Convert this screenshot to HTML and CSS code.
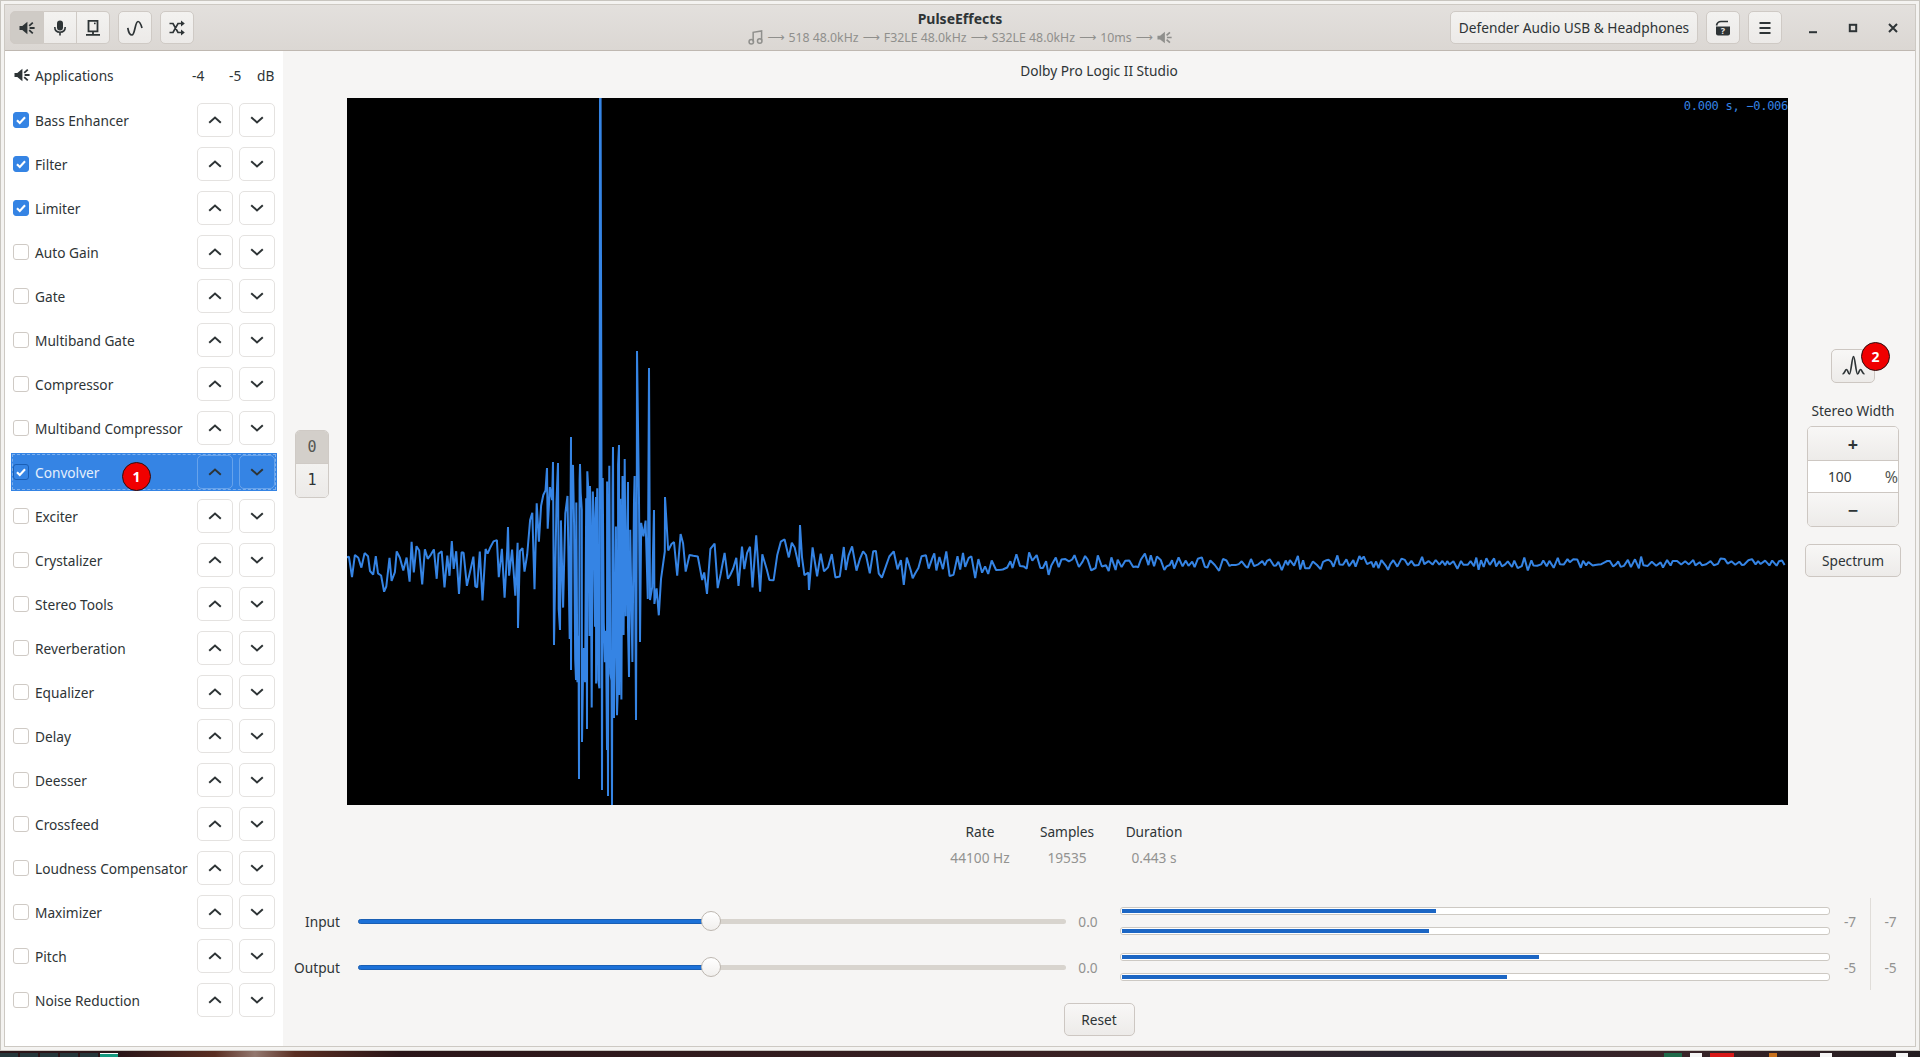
FILE: index.html
```html
<!DOCTYPE html>
<html lang="en">
<head>
  <meta charset="UTF-8">
  <title>PulseEffects</title>
  <link rel="stylesheet" href="styles.css">
</head>
<body>
  <svg class="icon-defs" width="0" height="0">
    <symbol id="i-speaker" viewBox="0 0 16 16">
      <path d="M0.5 6h2.8L8.400 1.800v12.400L3.300 10H0.500z" fill="currentColor"/>
      <path d="M10.200 5.800l3.600-3.200M10.600 8h5M10.200 10.200l3.600 3.200" fill="none" stroke="currentColor" stroke-width="1.8"/>
    </symbol>
    <symbol id="i-up" viewBox="0 0 16 16">
      <path d="M2.200 10.800L8 5.600 13.800 10.800" fill="none" stroke="currentColor" stroke-width="2"/>
    </symbol>
    <symbol id="i-down" viewBox="0 0 16 16">
      <path d="M2.200 5.200L8 10.400 13.800 5.200" fill="none" stroke="currentColor" stroke-width="2"/>
    </symbol>
    <symbol id="i-check" viewBox="0 0 16 16">
      <path d="M3.400 8.200l3.200 3.200 6-6.600" fill="none" stroke="#fff" stroke-width="2.400"/>
    </symbol>
  </svg>

  <div class="frame">
    <div class="window">
      <header class="titlebar">
        <div class="bar-left">
          <div class="btn-group">
            <button class="hbtn active"><svg class="ico"><use href="#i-speaker"/></svg></button>
            <button class="hbtn">
              <svg class="ico" viewBox="0 0 16 16"><rect x="5" y="0.500" width="6" height="10" rx="3" fill="currentColor"/><path d="M2.800 7c0 3.400 2.200 5.200 5.200 5.200s5.200-1.800 5.200-5.200M8 12v3.500" fill="none" stroke="currentColor" stroke-width="1.600"/></svg>
            </button>
            <button class="hbtn">
              <svg class="ico" viewBox="0 0 16 16"><path d="M3.500 0.900h9v10.500h-9zM1 14.800h14M8 11v3.500" fill="none" stroke="currentColor" stroke-width="1.800"/><rect x="9" y="2.600" width="1.600" height="1.600" fill="currentColor"/></svg>
            </button>
          </div>
          <button class="hbtn solo">
            <svg class="ico" viewBox="0 0 16 16"><path d="M0.800 8C1.500 12.500 3 15 5 15 8 15 8 1.500 11 1.500 13 1.500 14 4.500 15 8" fill="none" stroke="currentColor" stroke-width="1.700"/></svg>
          </button>
          <button class="hbtn solo">
            <svg class="ico" viewBox="0 0 16 16"><path d="M0.500 3.500H4L9 12.500h3.500M0.500 12.500H4L9 3.500h3.500" fill="none" stroke="currentColor" stroke-width="1.700"/><path d="M12 0.500L15.800 3.500 12 6.500zM12 9.500l3.800 3-3.800 3z" fill="currentColor"/></svg>
          </button>
        </div>

        <div class="title-box">
          <div class="title">PulseEffects</div>
          <div class="subtitle">
            <svg class="ico-small" viewBox="0 0 16 16"><path d="M5.500 12.500V2.500l9-1.500v10" fill="none" stroke="currentColor" stroke-width="1.600"/><circle cx="3.500" cy="12.600" r="2.400" fill="none" stroke="currentColor" stroke-width="1.600"/><circle cx="12.500" cy="11.600" r="2.400" fill="none" stroke="currentColor" stroke-width="1.600"/></svg>
            <span class="arrow">⟶</span><span>518 48.0kHz</span>
            <span class="arrow">⟶</span><span>F32LE 48.0kHz</span>
            <span class="arrow">⟶</span><span>S32LE 48.0kHz</span>
            <span class="arrow">⟶</span><span>10ms</span>
            <span class="arrow">⟶</span>
            <svg class="ico-small"><use href="#i-speaker"/></svg>
          </div>
        </div>

        <div class="bar-right">
          <button class="hbtn device">Defender Audio USB &amp; Headphones</button>
          <button class="hbtn solo">
            <svg class="ico" viewBox="0 0 16 16"><path d="M1.500 5.500C2 3 3.500 1.500 6 1.500h7" fill="none" stroke="currentColor" stroke-width="1.600"/><path d="M1 6.500h14v7a2 2 0 0 1-2 2H3a2 2 0 0 1-2-2z" fill="currentColor"/><text x="8" y="14" class="help-mark">?</text></svg>
          </button>
          <button class="hbtn solo">
            <svg class="ico" viewBox="0 0 16 16"><path d="M2.500 3h11M2.500 8h11M2.500 13h11" fill="none" stroke="currentColor" stroke-width="2"/></svg>
          </button>
          <div class="win-controls">
            <svg class="win-ico" viewBox="0 0 16 16"><path d="M4 12.200h8" stroke="currentColor" stroke-width="2"/></svg>
            <svg class="win-ico" viewBox="0 0 16 16"><rect x="4.800" y="4.800" width="6.400" height="6.400" fill="none" stroke="currentColor" stroke-width="2"/></svg>
            <svg class="win-ico" viewBox="0 0 16 16"><path d="M4 4l8 8M12 4l-8 8" stroke="currentColor" stroke-width="2"/></svg>
          </div>
        </div>
      </header>

      <div class="body-row">
        <aside class="sidebar">
          <div class="apps-row">
            <svg class="apps-ico"><use href="#i-speaker"/></svg>
            <span class="apps-label">Applications</span>
            <span class="db db-l">-4</span>
            <span class="db db-r">-5</span>
            <span class="db db-u">dB</span>
          </div>

          <div class="plugin"><span class="check on"><svg><use href="#i-check"/></svg></span><span class="plugin-name">Bass Enhancer</span><button class="move"><svg><use href="#i-up"/></svg></button><button class="move"><svg><use href="#i-down"/></svg></button></div>
          <div class="plugin"><span class="check on"><svg><use href="#i-check"/></svg></span><span class="plugin-name">Filter</span><button class="move"><svg><use href="#i-up"/></svg></button><button class="move"><svg><use href="#i-down"/></svg></button></div>
          <div class="plugin"><span class="check on"><svg><use href="#i-check"/></svg></span><span class="plugin-name">Limiter</span><button class="move"><svg><use href="#i-up"/></svg></button><button class="move"><svg><use href="#i-down"/></svg></button></div>
          <div class="plugin"><span class="check"></span><span class="plugin-name">Auto Gain</span><button class="move"><svg><use href="#i-up"/></svg></button><button class="move"><svg><use href="#i-down"/></svg></button></div>
          <div class="plugin"><span class="check"></span><span class="plugin-name">Gate</span><button class="move"><svg><use href="#i-up"/></svg></button><button class="move"><svg><use href="#i-down"/></svg></button></div>
          <div class="plugin"><span class="check"></span><span class="plugin-name">Multiband Gate</span><button class="move"><svg><use href="#i-up"/></svg></button><button class="move"><svg><use href="#i-down"/></svg></button></div>
          <div class="plugin"><span class="check"></span><span class="plugin-name">Compressor</span><button class="move"><svg><use href="#i-up"/></svg></button><button class="move"><svg><use href="#i-down"/></svg></button></div>
          <div class="plugin"><span class="check"></span><span class="plugin-name">Multiband Compressor</span><button class="move"><svg><use href="#i-up"/></svg></button><button class="move"><svg><use href="#i-down"/></svg></button></div>
          <div class="plugin selected"><span class="check on"><svg><use href="#i-check"/></svg></span><span class="plugin-name">Convolver</span><button class="move"><svg><use href="#i-up"/></svg></button><button class="move"><svg><use href="#i-down"/></svg></button><span class="badge badge-one">1</span></div>
          <div class="plugin"><span class="check"></span><span class="plugin-name">Exciter</span><button class="move"><svg><use href="#i-up"/></svg></button><button class="move"><svg><use href="#i-down"/></svg></button></div>
          <div class="plugin"><span class="check"></span><span class="plugin-name">Crystalizer</span><button class="move"><svg><use href="#i-up"/></svg></button><button class="move"><svg><use href="#i-down"/></svg></button></div>
          <div class="plugin"><span class="check"></span><span class="plugin-name">Stereo Tools</span><button class="move"><svg><use href="#i-up"/></svg></button><button class="move"><svg><use href="#i-down"/></svg></button></div>
          <div class="plugin"><span class="check"></span><span class="plugin-name">Reverberation</span><button class="move"><svg><use href="#i-up"/></svg></button><button class="move"><svg><use href="#i-down"/></svg></button></div>
          <div class="plugin"><span class="check"></span><span class="plugin-name">Equalizer</span><button class="move"><svg><use href="#i-up"/></svg></button><button class="move"><svg><use href="#i-down"/></svg></button></div>
          <div class="plugin"><span class="check"></span><span class="plugin-name">Delay</span><button class="move"><svg><use href="#i-up"/></svg></button><button class="move"><svg><use href="#i-down"/></svg></button></div>
          <div class="plugin"><span class="check"></span><span class="plugin-name">Deesser</span><button class="move"><svg><use href="#i-up"/></svg></button><button class="move"><svg><use href="#i-down"/></svg></button></div>
          <div class="plugin"><span class="check"></span><span class="plugin-name">Crossfeed</span><button class="move"><svg><use href="#i-up"/></svg></button><button class="move"><svg><use href="#i-down"/></svg></button></div>
          <div class="plugin"><span class="check"></span><span class="plugin-name">Loudness Compensator</span><button class="move"><svg><use href="#i-up"/></svg></button><button class="move"><svg><use href="#i-down"/></svg></button></div>
          <div class="plugin"><span class="check"></span><span class="plugin-name">Maximizer</span><button class="move"><svg><use href="#i-up"/></svg></button><button class="move"><svg><use href="#i-down"/></svg></button></div>
          <div class="plugin"><span class="check"></span><span class="plugin-name">Pitch</span><button class="move"><svg><use href="#i-up"/></svg></button><button class="move"><svg><use href="#i-down"/></svg></button></div>
          <div class="plugin"><span class="check"></span><span class="plugin-name">Noise Reduction</span><button class="move"><svg><use href="#i-up"/></svg></button><button class="move"><svg><use href="#i-down"/></svg></button></div>
        </aside>

        <main class="content">
          <div class="preset-name">Dolby Pro Logic II Studio</div>

          <div class="wave-row">
            <div class="tabs-col">
              <div class="tabs">
                <div class="tab active">0</div>
                <div class="tab">1</div>
              </div>
            </div>

            <div class="plot">
              <svg id="wave" class="wave" viewBox="347 98 1441 707"><polyline id="wave-line" points=""/></svg>
              <span class="plot-readout">0.000 s, −0.006</span>
            </div>

            <div class="side-col">
              <div class="peak-wrap">
                <button class="gbtn peak">
                  <svg class="peak-ico" viewBox="0 0 23 22"><path d="M0.500 19c2 0 2.500-4.500 4-4.500S6 19 7.500 19 10 1.500 11.500 1.500 14 19 15.500 19s1.500-4.500 3-4.500 2 4.500 4 4.500" fill="none" stroke="currentColor" stroke-width="1.700"/></svg>
                </button>
                <span class="badge badge-two">2</span>
              </div>
              <div class="side-label">Stereo Width</div>
              <div class="spin">
                <div class="spin-btn">+</div>
                <div class="spin-value"><span class="spin-num">100</span><span class="spin-unit">%</span></div>
                <div class="spin-btn">−</div>
              </div>
              <button class="gbtn spectrum">Spectrum</button>
            </div>
          </div>

          <div class="info">
            <div class="info-col"><div class="info-head">Rate</div><div class="info-val">44100 Hz</div></div>
            <div class="info-col"><div class="info-head">Samples</div><div class="info-val">19535</div></div>
            <div class="info-col"><div class="info-head">Duration</div><div class="info-val">0.443 s</div></div>
          </div>

          <div class="gains">
            <div class="gain-row">
              <span class="gain-label">Input</span>
              <div class="slider"><div class="slider-fill"></div><div class="slider-thumb"></div></div>
              <span class="gain-val">0.0</span>
              <div class="levels">
                <div class="level"><div class="level-fill" style="width: 314px"></div></div>
                <div class="level"><div class="level-fill" style="width: 307px"></div></div>
              </div>
              <span class="lvl-val">-7</span>
              <span class="lvl-val lvl-sep">-7</span>
            </div>
            <div class="gain-row">
              <span class="gain-label">Output</span>
              <div class="slider"><div class="slider-fill"></div><div class="slider-thumb"></div></div>
              <span class="gain-val">0.0</span>
              <div class="levels">
                <div class="level"><div class="level-fill" style="width: 417px"></div></div>
                <div class="level"><div class="level-fill" style="width: 385px"></div></div>
              </div>
              <span class="lvl-val">-5</span>
              <span class="lvl-val lvl-sep">-5</span>
            </div>
          </div>

          <div class="reset-row"><button class="gbtn reset">Reset</button></div>
        </main>
      </div>
    </div>
  </div>

  <div class="desktop">
    <span class="dock-tile"></span><span class="dock-tile"></span><span class="dock-tile"></span><span class="dock-tile"></span><span class="dock-tile"></span><span class="dock-tile current"></span>
    <div class="tray">
      <span class="tray-item green"></span>
      <span class="tray-item white"></span>
      <span class="tray-item red"></span>
      <span class="tray-item orange"></span>
      <span class="tray-item white far"></span>
      <span class="tray-item white last"></span>
    </div>
  </div>

  <script src="wave.js"></script>
</body>
</html>
```

FILE: styles.css
```css
* {
  box-sizing: border-box;
}

body {
  margin: 0;
  width: 1920px;
  height: 1057px;
  overflow: hidden;
  background-color: #241a1c;
  font-family: "Noto Sans", sans-serif;
  font-size: 13.7px;
  color: #2e3436;
}

button {
  font: inherit;
  color: inherit;
  padding: 0;
}

.icon-defs {
  position: absolute;
}

/* marco exterior y ventana */
.frame {
  height: 1051px;
  padding: 3px;
  background-color: #f4f3f1;
  border: 1px solid #c8c5bf;
}

.window {
  height: 100%;
  display: flex;
  flex-direction: column;
  border: 1px solid #cdc9c3;
  background-color: #f6f5f4;
}

/* barra de titulo */
.titlebar {
  height: 46px;
  flex: none;
  display: flex;
  align-items: center;
  justify-content: space-between;
  padding: 0 0 0 5px;
  position: relative;
  background: linear-gradient(#e3e0dd, #dbd7d3);
  border-bottom: 1px solid #bfb8b1;
}

.bar-left,
.bar-right {
  display: flex;
  align-items: center;
  gap: 8px;
}

.btn-group {
  display: flex;
}

.hbtn {
  height: 33px;
  display: flex;
  align-items: center;
  justify-content: center;
  background: linear-gradient(#f3f2f0, #eceae8);
  border: 1px solid #cfcac5;
  border-radius: 5px;
  color: #2e3436;
}

.btn-group .hbtn {
  width: 33px;
  border-radius: 0;
  border-left-width: 0;
}

.btn-group .hbtn:first-child {
  width: 34px;
  border-left-width: 1px;
  border-radius: 5px 0 0 5px;
}

.btn-group .hbtn:last-child {
  border-radius: 0 5px 5px 0;
}

.btn-group .hbtn.active {
  background: #cfcbc6;
}

.hbtn.solo {
  width: 34px;
}

.hbtn.device {
  width: 248px;
}

.ico {
  width: 16px;
  height: 16px;
}

.help-mark {
  font-size: 9px;
  font-weight: bold;
  fill: #eceae8;
  text-anchor: middle;
}

.title-box {
  position: absolute;
  left: 0;
  right: 0;
  top: 0;
  bottom: 0;
  display: flex;
  flex-direction: column;
  align-items: center;
  justify-content: center;
  pointer-events: none;
}

.title {
  font-weight: bold;
  font-size: 14px;
  line-height: 19px;
  margin-top: -1px;
}

.subtitle {
  display: flex;
  align-items: center;
  gap: 4px;
  font-size: 12.300px;
  line-height: 17px;
  color: #8f8f8c;
  margin-top: 1px;
}

.ico-small {
  width: 15px;
  height: 15px;
}

.arrow {
  font-family: "DejaVu Sans", sans-serif;
  font-size: 12px;
}

.bar-right {
  position: relative;
}

.win-controls {
  display: flex;
  gap: 24px;
  margin-left: 15px;
  margin-right: 14px;
  color: #2e3436;
}

.win-ico {
  width: 16px;
  height: 16px;
}

/* cuerpo */
.body-row {
  flex: 1;
  display: flex;
  min-height: 0;
}

.sidebar {
  width: 278px;
  flex: none;
  background-color: #fff;
  padding: 3px 0 0 6px;
}

.apps-row {
  height: 47px;
  display: flex;
  align-items: center;
  padding: 0 0 5px 3px;
}

.apps-ico {
  width: 16px;
  height: 16px;
  color: #2e3436;
  margin-right: 5px;
}

.apps-label {
  width: 157px;
}

.db-l {
  width: 37px;
}

.db-r {
  width: 28px;
}

.plugin {
  height: 38px;
  margin-bottom: 6px;
  width: 266px;
  display: flex;
  align-items: center;
  padding: 0 2px;
  position: relative;
}

.check {
  width: 16px;
  height: 16px;
  flex: none;
  border: 1px solid #cfcac5;
  border-radius: 3px;
  background-color: #fff;
  margin-right: 6px;
}

.check.on {
  background-color: #3584e4;
  border-color: #3584e4;
}

.check svg {
  display: block;
  width: 14px;
  height: 14px;
}

.plugin-name {
  flex: 1;
  white-space: nowrap;
}

.move {
  width: 36px;
  height: 34px;
  margin-left: 6px;
  flex: none;
  display: flex;
  align-items: center;
  justify-content: center;
  background-color: #fff;
  border: 1px solid #e4e2e0;
  border-radius: 5px;
  color: #2e3436;
}

.move svg {
  width: 16px;
  height: 16px;
}

.plugin.selected {
  background-color: #3584e4;
  outline: 1px dashed rgba(255, 255, 255, 0.35);
  outline-offset: -2px;
}

.plugin.selected .check {
  border-color: #1b5fb5;
}

.plugin.selected .plugin-name {
  color: #e4effc;
}

.plugin.selected .move {
  background-color: transparent;
  border: 1px solid rgba(255, 255, 255, 0.25);
}

.badge {
  position: absolute;
  width: 29px;
  height: 29px;
  border-radius: 50%;
  background-color: #f00000;
  border: 1px solid #2b1010;
  color: #fff;
  font-weight: bold;
  font-size: 14px;
  display: flex;
  align-items: center;
  justify-content: center;
}

.badge-one {
  left: 111px;
  top: 9px;
}

.badge-two {
  left: 30px;
  top: -7px;
}

/* contenido */
.content {
  flex: 1;
  min-width: 0;
}

.preset-name {
  height: 47px;
  padding-top: 10px;
  text-align: center;
  line-height: 20px;
}

.wave-row {
  display: flex;
  height: 707px;
}

.tabs-col {
  width: 64px;
  flex: none;
  display: flex;
  align-items: center;
  padding: 24px 0 0 12px;
}

.tabs {
  width: 34px;
  border: 1px solid #cfcac5;
  border-radius: 5px;
  overflow: hidden;
  font-family: "DejaVu Sans Mono", monospace;
  font-size: 15px;
}

.tab {
  height: 33px;
  display: flex;
  align-items: center;
  justify-content: center;
  background: linear-gradient(#f3f2f0, #eceae8);
}

.tab.active {
  background: #d3cfca;
  border-bottom: 1px solid #cfcac5;
  color: #555753;
}

.plot {
  width: 1441px;
  flex: none;
  background-color: #000;
  position: relative;
  overflow: hidden;
}

.wave {
  display: block;
  width: 100%;
  height: 100%;
}

.wave polyline {
  fill: none;
  stroke: #3584e4;
  stroke-width: 2;
  stroke-linejoin: bevel;
}

.plot-readout {
  position: absolute;
  right: 0;
  top: 0;
  font-family: "DejaVu Sans Mono", monospace;
  font-size: 12px;
  letter-spacing: -0.28px;
  line-height: 16px;
  white-space: pre;
  color: #3584e4;
}

.side-col {
  flex: 1;
  display: flex;
  flex-direction: column;
  align-items: center;
  justify-content: center;
  padding-top: 23px;
  padding-left: 3px;
}

.gbtn {
  background: linear-gradient(#f8f7f6, #edebe9);
  border: 1px solid #cdc7c2;
  border-radius: 5px;
  display: flex;
  align-items: center;
  justify-content: center;
}

.peak-wrap {
  position: relative;
  width: 44px;
  height: 34px;
}

.peak {
  width: 44px;
  height: 34px;
}

.peak-ico {
  width: 23px;
  height: 22px;
}

.side-label {
  margin-top: 18px;
  line-height: 20px;
}

.spin {
  width: 92px;
  margin-top: 5px;
  border: 1px solid #cdc7c2;
  border-radius: 5px;
  overflow: hidden;
}

.spin-btn {
  height: 33px;
  background: linear-gradient(#f8f7f6, #edebe9);
  display: flex;
  align-items: center;
  justify-content: center;
  font-weight: bold;
  font-size: 18px;
}

.spin-value {
  height: 33px;
  background-color: #fff;
  border-top: 1px solid #cdc7c2;
  border-bottom: 1px solid #cdc7c2;
  display: flex;
  align-items: center;
  padding-left: 20px;
}

.spin-num {
  flex: 1;
}

.spin-unit {
  font-size: 16px;
  color: #555753;
}

.spectrum {
  width: 96px;
  height: 33px;
  margin-top: 17px;
}

.info {
  display: flex;
  justify-content: center;
  gap: 27px;
  padding: 17px 64px 0 0;
  height: 93px;
}

.info-col {
  text-align: center;
  line-height: 20px;
  min-width: 60px;
}

.info-val {
  margin-top: 6px;
  color: #929290;
}

.gain-row {
  height: 46px;
  display: flex;
  align-items: center;
}

.gain-label {
  width: 57px;
  text-align: right;
  flex: none;
}

.slider {
  width: 708px;
  height: 5px;
  margin-left: 18px;
  flex: none;
  position: relative;
  background-color: #d8d4ce;
  border-radius: 3px;
}

.slider-fill {
  width: 353px;
  height: 100%;
  background-color: #1c71d8;
  border: 1px solid #1a5fb4;
  border-radius: 3px 0 0 3px;
}

.slider-thumb {
  position: absolute;
  left: 343px;
  top: -8px;
  width: 20px;
  height: 20px;
  border-radius: 50%;
  background: linear-gradient(#fff, #f1efed);
  border: 1px solid #bdb7b0;
}

.gain-val {
  width: 54px;
  flex: none;
  text-align: center;
  padding-right: 10px;
  color: #929290;
}

.levels {
  width: 710px;
  flex: none;
  display: flex;
  flex-direction: column;
  gap: 12px;
}

.level {
  height: 8px;
  padding: 1px;
  background-color: #fff;
  border: 1px solid #cdc9c3;
  border-radius: 3px;
  overflow: hidden;
}

.level-fill {
  height: 100%;
  background-color: #1c66c4;
}

.lvl-val {
  width: 40px;
  flex: none;
  color: #929290;
  align-self: stretch;
  display: flex;
  align-items: center;
  justify-content: center;
}

.lvl-sep {
  border-left: 1px solid #e0ddd9;
}

.reset-row {
  display: flex;
  justify-content: center;
  padding-top: 13px;
}

.reset {
  width: 71px;
  height: 33px;
}

/* franja del escritorio */
.desktop {
  height: 6px;
  padding-top: 2px;
  display: flex;
  gap: 2px;
  background: linear-gradient(90deg, #2a1518 120px, #5a2e22 215px, #93786f 255px, #5a2e22 295px, #2a1518 400px, #3a2224 1080px, #2a2530 1400px, #3a2428 1660px, #241c20);
}

.dock-tile {
  width: 18px;
  background-color: #24363a;
}

.dock-tile.current {
  background-color: #15997f;
  border-top: 1px solid #fff;
}

.tray {
  display: flex;
  margin-left: 1544px;
}

.tray-item {
  height: 4px;
  margin-right: 8px;
}

.tray-item.green {
  width: 18px;
  background-color: #1f6a4a;
}

.tray-item.white {
  width: 12px;
  background-color: #f4f4f4;
}

.tray-item.red {
  width: 24px;
  background-color: #d81818;
  margin-right: 35px;
}

.tray-item.orange {
  width: 8px;
  background-color: #c8701c;
  margin-right: 43px;
}

.tray-item.far {
  margin-right: 64px;
}
```

FILE: wave.js
```js
// Forma de onda del impulso: generador con semilla fija, picos principales a mano
var seed = 7654321;

function rnd() {
  seed = (seed * 1664525 + 1013904223) % 4294967296;
  return seed / 4294967296;
}

var CENTER = 563;

// x, amplitud hacia arriba, amplitud hacia abajo
var envelope = [
  [347, 22, 24], [460, 30, 42], [500, 36, 48], [530, 55, 62], [545, 75, 85],
  [570, 100, 150], [600, 105, 185], [625, 110, 165], [640, 80, 120], [650, 55, 70], [665, 45, 50],
  [700, 38, 40], [760, 32, 36], [800, 26, 26], [860, 22, 26], [1000, 13, 15],
  [1150, 11, 10], [1300, 8, 8], [1788, 5, 5]
];

// picos medidos sobre la captura
var spikes = [
  [600, 98], [600.6, 98], [637, 351], [649, 368], [547, 468], [553, 462], [558, 463], [571, 437],
  [580, 464], [590, 486], [596, 497], [613, 447], [619, 445], [628, 482], [634, 500],
  [654, 510], [665, 497], [579, 779], [582, 742], [587, 729], [571, 670], [576, 680],
  [602, 790], [607, 750], [608, 796], [612, 805], [614, 718], [618, 683], [629, 677],
  [636, 720], [640, 642], [554, 645], [560, 630], [518, 628], [508, 527], [800, 525], [809, 590]
];

function amp(x, col) {
  for (var i = 1; i < envelope.length; i++) {
    if (x <= envelope[i][0]) {
      var a = envelope[i - 1];
      var b = envelope[i];
      var t = (x - a[0]) / (b[0] - a[0]);
      return a[col] + (b[col] - a[col]) * t;
    }
  }
  return 5;
}

function step(x) {
  if (x >= 570 && x < 625) return 1.1;
  if (x >= 530 && x < 660) return 2.2;
  if (x < 530) return 1.8 + rnd() * 1.6;
  return 2 + rnd() * 2.5;
}

var samples = [];
var up = true;
for (var x = 347; x < 1786; x += step(x)) {
  var dense = x >= 530 && x < 660;
  var k = dense ? 0.3 + rnd() * 0.7 : 0.1 + rnd() * rnd() * 0.9 + rnd() * 0.2;
  var y = up ? CENTER - amp(x, 1) * k : CENTER + amp(x, 2) * k;
  samples.push([x, y]);
  up = rnd() < 0.65 ? !up : up;
}

spikes.forEach(function (s) {
  samples.push(s);
});
samples.sort(function (a, b) {
  return a[0] - b[0];
});

document.getElementById("wave-line").setAttribute("points", samples.map(function (p) {
  return p[0].toFixed(1) + "," + p[1].toFixed(1);
}).join(" "));
```
